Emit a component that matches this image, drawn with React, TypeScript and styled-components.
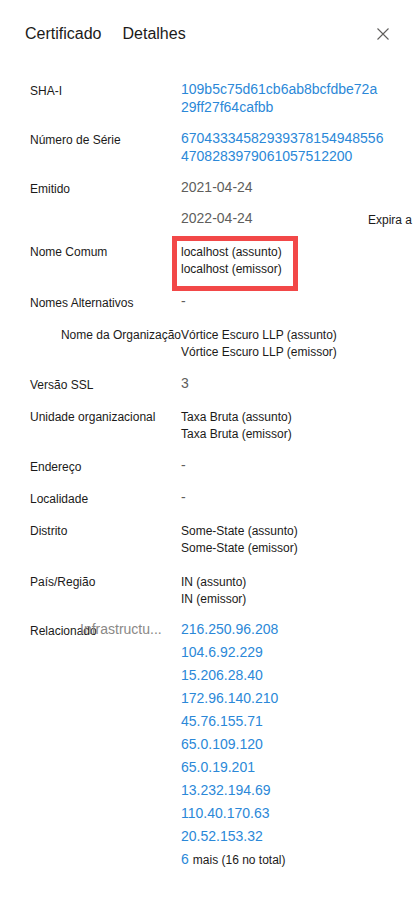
import React from "react";
import styled, { createGlobalStyle, css } from "styled-components";

const GlobalStyle = createGlobalStyle`
  html, body {
    margin: 0;
    padding: 0;
    background: #ffffff;
  }
  body {
    font-family: "Liberation Sans", Arial, sans-serif;
    color: #1b1a19;
    overflow: hidden;
  }
`;

const Page = styled.div`
  width: 413px;
  min-height: 905px;
  overflow: hidden;
  background: #ffffff;
`;

const Header = styled.header`
  display: flex;
  align-items: center;
  padding: 24px 24px 0 25px;
`;

const Tabs = styled.nav`
  display: flex;
  gap: 21px;
`;

const Tab = styled.span`
  font-size: 16px;
  line-height: 20px;
  color: #1b1a19;
  white-space: nowrap;
`;

const CloseButton = styled.button`
  margin-left: auto;
  width: 12px;
  height: 12px;
  padding: 0;
  border: 0;
  background: transparent;
  display: flex;
  cursor: pointer;
`;

const List = styled.div`
  display: flex;
  flex-direction: column;
  gap: 13.3px;
  padding: 35.5px 0 40px 30px;
`;

const Row = styled.div<{ $small?: boolean; $extra?: boolean; $tight?: boolean }>`
  display: grid;
  grid-template-columns: ${(p) => (p.$extra ? "151px 187px auto" : "151px 1fr")};
  align-items: start;
  padding-top: ${(p) => (p.$small ? "3.7px" : "0")};
  margin-top: ${(p) => (p.$tight ? "-3px" : "0")};
  white-space: nowrap;
`;

const Label = styled.div<{ $small?: boolean; $alignEnd?: boolean }>`
  font-size: 12px;
  line-height: ${(p) => (p.$small ? "17px" : "18px")};
  margin-top: ${(p) => (p.$small ? "0" : "2px")};
  margin-bottom: ${(p) => (p.$small ? "0" : "-2px")};
  color: #1b1a19;
  white-space: nowrap;
  ${(p) =>
    p.$alignEnd &&
    css`
      justify-self: end;
    `}
`;

const LabelGroup = styled.div`
  display: flex;
  align-items: flex-start;
`;

const NarrowLabel = styled.span`
  width: 50px;
  font-size: 12px;
  line-height: 23px;
  margin-top: 2px;
  color: #1b1a19;
  white-space: nowrap;
`;

const Hint = styled.span`
  font-size: 14px;
  line-height: 23px;
  color: #8a8886;
  white-space: nowrap;
`;

type Tone = "link" | "muted" | "plain";

const Value = styled.div<{ $tone: Tone }>`
  display: flex;
  flex-direction: column;
  white-space: nowrap;
  ${(p) =>
    p.$tone === "plain"
      ? css`
          font-size: 12px;
          line-height: 17px;
          color: #1b1a19;
        `
      : css`
          font-size: 14px;
          line-height: 18px;
          color: ${p.$tone === "link" ? "#2b88d8" : "#605e5c"};
        `}
`;

const Aside = styled.div`
  font-size: 12px;
  line-height: 18px;
  margin-top: 2px;
  margin-bottom: -2px;
  color: #1b1a19;
  white-space: nowrap;
`;

const Highlight = styled.div`
  position: relative;
  display: flex;
  flex-direction: column;
  font-size: 12px;
  line-height: 17px;
  color: #1b1a19;
  &::after {
    content: "";
    position: absolute;
    top: -8px;
    left: -9px;
    width: 126px;
    height: 55px;
    box-sizing: border-box;
    border: 5px solid #f24848;
    pointer-events: none;
  }
`;

const LinkList = styled.div`
  display: flex;
  flex-direction: column;
  font-size: 14px;
  line-height: 23px;
  color: #2b88d8;
  white-space: nowrap;
`;

const MoreLine = styled.div`
  display: flex;
  align-items: baseline;
  gap: 4px;
`;

const MoreText = styled.span`
  font-size: 12px;
  color: #1b1a19;
`;

type Item = {
  label: string;
  lines: string[];
  tone: Tone;
  alignEnd?: boolean;
};

const topItems: Item[] = [
  { label: "SHA-I", lines: ["109b5c75d61cb6ab8bcfdbe72a", "29ff27f64cafbb"], tone: "link" },
  { label: "Número de Série", lines: ["67043334582939378154948556", "4708283979061057512200"], tone: "link" },
  { label: "Emitido", lines: ["2021-04-24"], tone: "muted" },
];

const midItems: Item[] = [
  { label: "Nomes Alternativos", lines: ["-"], tone: "muted" },
  {
    label: "Nome da Organização",
    lines: ["Vórtice Escuro LLP (assunto)", "Vórtice Escuro LLP (emissor)"],
    tone: "plain",
    alignEnd: true,
  },
  { label: "Versão SSL", lines: ["3"], tone: "muted" },
  { label: "Unidade organizacional", lines: ["Taxa Bruta (assunto)", "Taxa Bruta (emissor)"], tone: "plain" },
  { label: "Endereço", lines: ["-"], tone: "muted" },
  { label: "Localidade", lines: ["-"], tone: "muted" },
  { label: "Distrito", lines: ["Some-State (assunto)", "Some-State (emissor)"], tone: "plain" },
  { label: "País/Região", lines: ["IN (assunto)", "IN (emissor)"], tone: "plain" },
];

const related = [
  "216.250.96.208",
  "104.6.92.229",
  "15.206.28.40",
  "172.96.140.210",
  "45.76.155.71",
  "65.0.109.120",
  "65.0.19.201",
  "13.232.194.69",
  "110.40.170.63",
  "20.52.153.32",
];

const InfoRow = ({ item }: { item: Item }) => {
  const small = item.tone === "plain";
  return (
    <Row $small={small}>
      <Label $small={small} $alignEnd={item.alignEnd}>
        {item.label}
      </Label>
      <Value $tone={item.tone}>
        {item.lines.map((l) => (
          <span key={l}>{l}</span>
        ))}
      </Value>
    </Row>
  );
};

const CloseIcon = () => (
  <svg width="12" height="12" viewBox="0 0 12 12" fill="none">
    <path d="M0.5 0.5L11.5 11.5M11.5 0.5L0.5 11.5" stroke="#605e5c" strokeWidth="1.1" />
  </svg>
);

export default function App() {
  return (
    <>
      <GlobalStyle />
      <Page>
        <Header>
          <Tabs>
            <Tab>Certificado</Tab>
            <Tab>Detalhes</Tab>
          </Tabs>
          <CloseButton aria-label="Fechar">
            <CloseIcon />
          </CloseButton>
        </Header>
        <List>
          {topItems.map((it) => (
            <InfoRow key={it.label} item={it} />
          ))}
          <Row $extra>
            <Label />
            <Value $tone="muted">
              <span>2022-04-24</span>
            </Value>
            <Aside>Expira a</Aside>
          </Row>
          <Row $small>
            <Label $small>Nome Comum</Label>
            <div>
              <Highlight>
                <span>localhost (assunto)</span>
                <span>localhost (emissor)</span>
              </Highlight>
            </div>
          </Row>
          {midItems.map((it) => (
            <InfoRow key={it.label} item={it} />
          ))}
          <Row $tight>
            <LabelGroup>
              <NarrowLabel>Relacionado</NarrowLabel>
              <Hint>Infrastructu...</Hint>
            </LabelGroup>
            <LinkList>
              {related.map((ip) => (
                <span key={ip}>{ip}</span>
              ))}
              <MoreLine>
                <span>6</span>
                <MoreText>mais (16 no total)</MoreText>
              </MoreLine>
            </LinkList>
          </Row>
        </List>
      </Page>
    </>
  );
}
